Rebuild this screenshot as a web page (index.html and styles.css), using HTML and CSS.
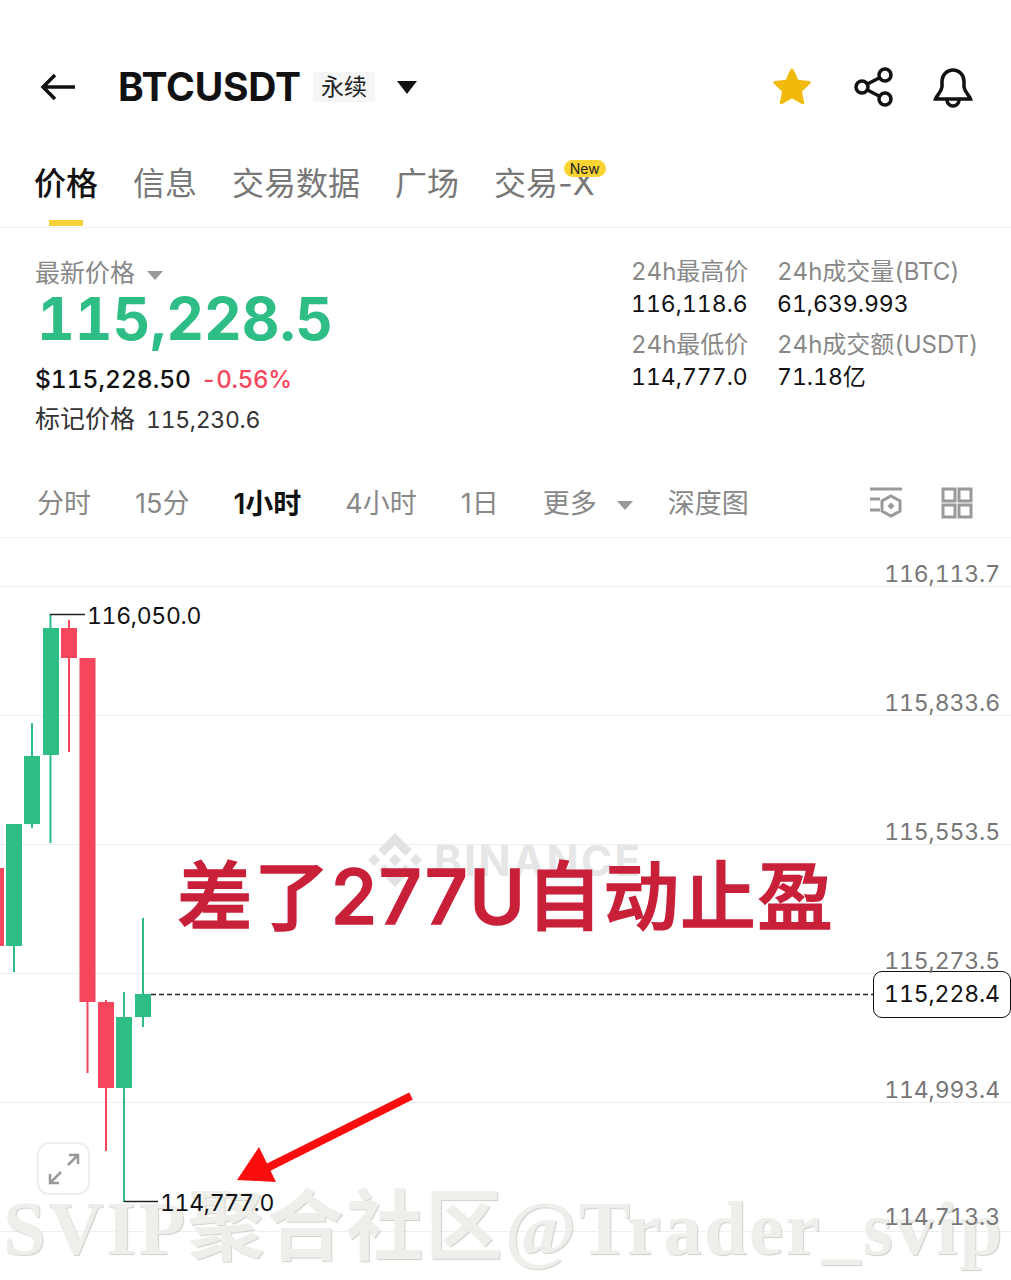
FILE: index.html
```html
<!DOCTYPE html>
<html lang="zh">
<head>
    <meta charset="UTF-8">
    <meta name="viewport" content="width=device-width, initial-scale=1.0">
    <title>BTCUSDT 永续</title>
    <link rel="stylesheet" href="styles.css">
</head>
<body>
    <header class="topbar">
        <svg class="back-icon" width="36" height="30" viewBox="0 0 36 30"><path d="M35 15H3M15 3L3 15l12 12"/></svg>
        <h1 class="symbol">BTCUSDT</h1>
        <span class="tag">永续</span>
        <span class="caret-big"></span>
        <div class="top-actions">
            <svg width="42" height="42" viewBox="0 0 42 42"><path class="star" d="M21 4l5.200 11.200 12 1.400-8.900 8.200 2.400 12L21 30.800 10.300 36.800l2.400-12-8.900-8.200 12-1.400z"/></svg>
            <svg class="line-icon" width="40" height="42" viewBox="0 0 40 42"><circle cx="9" cy="21" r="6"/><circle cx="32" cy="9" r="6"/><circle cx="32" cy="33" r="6"/><path d="M14.500 18l12-6.200M14.500 24l12 6.200"/></svg>
            <svg class="line-icon" width="40" height="42" viewBox="0 0 40 42"><path d="M2.500 33h35c-1-3.500-5.500-6-6.500-12v-6a11 11 0 0 0-22 0v6c-1 6-5.500 8.500-6.500 12z"/><path d="M14 34a6 6 0 0 0 12 0"/></svg>
        </div>
    </header>

    <nav class="tabs">
        <a class="tab active">价格</a>
        <a class="tab">信息</a>
        <a class="tab">交易数据</a>
        <a class="tab">广场</a>
        <a class="tab">交易-X<span class="new-badge">New</span></a>
    </nav>

    <section class="summary">
        <div class="price-block">
            <div class="muted-label">最新价格<span class="caret-small"></span></div>
            <div class="last-price">115,228.5</div>
            <div class="price-sub"><strong>$115,228.50</strong><span class="change">-0.56%</span></div>
            <div class="mark-price">标记价格<span>115,230.6</span></div>
        </div>
        <div class="stats">
            <div class="stat"><div class="muted-label">24h最高价</div><div>116,118.6</div></div>
            <div class="stat"><div class="muted-label">24h成交量(BTC)</div><div>61,639.993</div></div>
            <div class="stat"><div class="muted-label">24h最低价</div><div>114,777.0</div></div>
            <div class="stat"><div class="muted-label">24h成交额(USDT)</div><div>71.18亿</div></div>
        </div>
    </section>

    <div class="intervals">
        <a>分时</a>
        <a>15分</a>
        <a class="current">1小时</a>
        <a>4小时</a>
        <a>1日</a>
        <a class="more">更多<span class="caret-small"></span></a>
        <a>深度图</a>
        <div class="chart-tools">
            <svg class="tool-icon" width="34" height="34" viewBox="0 0 34 34"><path d="M1 3h32M1 13h10M1 24h10"/><path d="M22 10l9 5v10l-9 5-9-5V15z"/><path class="dot" d="M22 16.500l3.500 3.500-3.500 3.500-3.500-3.500z"/></svg>
            <svg class="tool-icon" width="32" height="32" viewBox="0 0 32 32"><rect x="2" y="2" width="12" height="12"/><rect x="18" y="2" width="12" height="12"/><rect x="2" y="18" width="12" height="12"/><rect x="18" y="18" width="12" height="12"/></svg>
        </div>
    </div>

    <main class="chart">
        <div class="grid-row first"><span>116,113.7</span></div>
        <div class="grid-row"><span>115,833.6</span></div>
        <div class="grid-row"><span>115,553.5</span></div>
        <div class="grid-row"><span>115,273.5</span></div>
        <div class="grid-row"><span>114,993.4</span></div>
        <div class="grid-row bottom"><span>114,713.3</span></div>

        <div class="stamp">SVIP聚合社区@Trader_svip</div>

        <div class="binance-mark">
            <svg width="54" height="54" viewBox="0 0 126.600 126.600"><path d="M38.700 53.200L63.300 28.600l24.600 24.600 14.300-14.300L63.300 0 24.400 38.900z"/><path d="M0 63.300L14.300 49l14.300 14.300L14.300 77.600z"/><path d="M38.700 73.400L63.300 98l24.600-24.600 14.300 14.300-38.900 38.900-38.900-38.900z"/><path d="M98 63.300L112.300 49l14.300 14.300-14.300 14.300z"/><path d="M77.800 63.300L63.300 48.800 48.900 63.300l14.400 14.400z"/></svg>
            <span>BINANCE</span>
        </div>

        <svg class="candles" width="1011" height="742" viewBox="0 538 1011 742">
            <g class="down">
                <rect x="-12" y="868" width="16" height="78"/>
                <rect x="68" y="620" width="2" height="132"/>
                <rect x="61" y="628" width="16" height="30"/>
                <rect x="86.500" y="658" width="2" height="415"/>
                <rect x="79.500" y="658" width="16" height="344"/>
                <rect x="105" y="1000" width="2" height="151"/>
                <rect x="98" y="1002" width="16" height="86"/>
            </g>
            <g class="up">
                <rect x="13" y="946" width="2" height="26"/>
                <rect x="6" y="824" width="16" height="122"/>
                <rect x="31" y="723" width="2" height="105"/>
                <rect x="24" y="756" width="16" height="68"/>
                <rect x="49.500" y="614" width="2" height="229"/>
                <rect x="43" y="628" width="16" height="127"/>
                <rect x="123" y="992" width="2" height="210"/>
                <rect x="116" y="1017" width="16" height="71"/>
                <rect x="142" y="918" width="2" height="109"/>
                <rect x="135" y="994" width="16" height="23"/>
            </g>
            <path class="leader" d="M50 614.500h35M124 1201.500h34"/>
            <path class="last-line" d="M151 994.500h722"/>
            <path class="red-arrow" d="M411 1096l-160 80"/>
            <path class="red-arrow-head" d="M237 1180l22-33 17 35z"/>
        </svg>

        <span class="extreme high">116,050.0</span>
        <span class="extreme low">114,777.0</span>
        <span class="current-price">115,228.4</span>

        <button class="expand">
            <svg width="32" height="32" viewBox="0 0 32 32"><path d="M2 30L13 19M20 12L30 2M21 2h9v9M2 21v9h9"/></svg>
        </button>

        <div class="note">差了277U自动止盈</div>
    </main>
</body>
</html>
```

FILE: styles.css
```css
body {
    margin: 0;
    width: 1011px;
    height: 1280px;
    overflow: hidden;
    background-color: #fff;
    color: #111;
    font-family: Inter, "Noto Sans CJK SC", sans-serif;
}

/* top bar */
.topbar {
    display: flex;
    align-items: center;
    height: 64px;
    margin-top: 55px;
    padding: 0 38px 0 40px;
}

.back-icon path {
    fill: none;
    stroke: #111;
    stroke-width: 3.5;
}

.symbol {
    margin: 0 0 0 42px;
    font-size: 39px;
    font-weight: 700;
    line-height: 64px;
    letter-spacing: -0.2px;
}

.tag {
    margin-left: 12px;
    padding: 0 8px;
    background-color: #f5f5f5;
    border-radius: 3px;
    font-size: 23px;
    line-height: 30px;
    color: #222;
}

.caret-big {
    margin-left: 22px;
    border-top: 13px solid #111;
    border-left: 10px solid transparent;
    border-right: 10px solid transparent;
}

.top-actions {
    display: flex;
    align-items: center;
    gap: 40px;
    margin-left: auto;
}

.star {
    fill: #f0b90b;
    stroke: #f0b90b;
    stroke-width: 3;
    stroke-linejoin: round;
}

.line-icon circle, .line-icon path {
    fill: none;
    stroke: #111;
    stroke-width: 3.5;
}

/* tabs */
.tabs {
    display: flex;
    gap: 35px;
    height: 77px;
    margin-top: 31px;
    padding-left: 34px;
    border-bottom: 1px solid #f3f3f3;
}

.tab {
    position: relative;
    height: 66px;
    font-size: 32px;
    line-height: 68px;
    color: #777;
}

.tab.active {
    color: #111;
    font-weight: 500;
}

.tab.active::after {
    content: "";
    position: absolute;
    left: 15px;
    top: 70px;
    width: 34px;
    height: 6px;
    background-color: #f6d23a;
}

.new-badge {
    position: absolute;
    right: -11px;
    top: 10px;
    padding: 0 6px;
    background-color: #fcd535;
    border-radius: 10px;
    font-size: 14px;
    line-height: 17px;
    color: #222;
}

/* price summary */
.summary {
    display: flex;
    justify-content: space-between;
    height: 228px;
    padding: 0 35px;
    font-variant-numeric: tabular-nums;
}

.muted-label {
    color: #888;
    white-space: nowrap;
}

.price-block {
    padding-top: 25px;
    font-size: 25px;
}

.caret-small {
    display: inline-block;
    margin-left: 12px;
    vertical-align: middle;
    border-top: 9px solid #999;
    border-left: 8px solid transparent;
    border-right: 8px solid transparent;
}

.last-price {
    margin-left: 2px;
    font-size: 58.500px;
    font-weight: 700;
    line-height: 60px;
    color: #2ebd85;
}

.price-sub {
    margin-top: 10px;
    line-height: 40px;
}

.price-sub strong {
    font-size: 24.500px;
    font-weight: 500;
}

.change {
    margin-left: 10px;
    font-size: 24px;
    font-weight: 500;
    letter-spacing: -0.3px;
    color: #f6465d;
}

.mark-price {
    line-height: 38px;
    color: #333;
}

.mark-price span {
    margin-left: 11px;
    font-size: 23px;
    letter-spacing: -0.3px;
}

.stats {
    display: grid;
    grid-template-columns: 146px 198px;
    grid-auto-rows: 73px;
    padding-top: 27px;
    margin-right: 1px;
    font-size: 23px;
    line-height: 33px;
}

.stats .muted-label {
    font-size: 24px;
}

/* interval row */
.intervals {
    display: flex;
    align-items: center;
    gap: 44px;
    box-sizing: border-box;
    height: 82px;
    padding: 10px 38px 0 37px;
    border-bottom: 1px solid #f0f0f0;
    font-size: 27px;
    color: #888;
}

.intervals .current {
    font-size: 28px;
    color: #111;
    font-weight: 600;
}

.intervals .more {
    margin-right: -9px;
}

.intervals .more .caret-small {
    margin-left: 20px;
}

.chart-tools {
    display: flex;
    align-items: center;
    gap: 38px;
    margin-top: 3px;
    margin-left: auto;
}

.tool-icon path, .tool-icon rect {
    fill: none;
    stroke: #999;
    stroke-width: 3;
}

.tool-icon .dot {
    fill: #999;
    stroke: none;
}

/* chart */
.chart {
    position: relative;
    height: 742px;
}

.grid-row {
    display: flex;
    justify-content: flex-end;
    align-items: flex-end;
    height: 128px;
    padding-right: 11px;
    border-bottom: 1px solid #eee;
    font-size: 23px;
    font-variant-numeric: tabular-nums;
    letter-spacing: -0.1px;
    line-height: 24px;
    color: #777;
}

.grid-row span {
    position: relative;
    z-index: 1;
}

.grid-row.first {
    height: 48px;
}

.grid-row.bottom span {
    margin-bottom: 2px;
}

.stamp {
    position: absolute;
    left: 3px;
    top: 635px;
    font-family: "Liberation Serif", "Noto Sans CJK SC", serif;
    font-size: 77px;
    font-weight: 700;
    line-height: 110px;
    letter-spacing: 2.300px;
    white-space: nowrap;
    color: #ecece8;
    text-shadow: 1px 1px 1px #c8c8c4, -1px -1px 0 #fff;
    opacity: 0.85;
}

.candles {
    position: absolute;
    left: 0;
    top: 0;
}

.down rect {
    fill: #f6465d;
}

.up rect {
    fill: #2ebd85;
}

.leader {
    fill: none;
    stroke: #222;
    stroke-width: 1.5;
}

.last-line {
    fill: none;
    stroke: #222;
    stroke-width: 1.5;
    stroke-dasharray: 5 3;
}

.red-arrow {
    fill: none;
    stroke: #f90d0d;
    stroke-width: 8;
}

.red-arrow-head {
    fill: #f90d0d;
}

.extreme {
    position: absolute;
    font-size: 23px;
    font-variant-numeric: tabular-nums;
    letter-spacing: -0.3px;
    line-height: 26px;
    color: #111;
}

.extreme.high {
    left: 87px;
    top: 65px;
}

.extreme.low {
    left: 160px;
    top: 652px;
}

.current-price {
    position: absolute;
    left: 873px;
    top: 433px;
    box-sizing: border-box;
    width: 138px;
    height: 47px;
    border: 1px solid #111;
    border-radius: 9px;
    background-color: #fff;
    font-size: 23px;
    font-variant-numeric: tabular-nums;
    letter-spacing: -0.1px;
    line-height: 45px;
    text-align: center;
    color: #111;
}

.expand {
    position: absolute;
    left: 37px;
    top: 604px;
    width: 53px;
    height: 53px;
    padding: 0;
    border: 2px solid #eee;
    border-radius: 12px;
    background-color: #fff;
}

.expand svg {
    display: block;
    margin: auto;
}

.expand path {
    fill: none;
    stroke: #999;
    stroke-width: 2.5;
}

.binance-mark {
    position: absolute;
    left: 368px;
    top: 295px;
    display: flex;
    align-items: center;
    gap: 12px;
    font-size: 42px;
    font-weight: 700;
    letter-spacing: 2.400px;
    color: #e6e6e6;
}

.binance-mark svg {
    fill: #e2e2e2;
}

.note {
    position: absolute;
    left: 177px;
    top: 304px;
    font-size: 75.500px;
    font-weight: 500;
    letter-spacing: 1.400px;
    line-height: 110px;
    white-space: nowrap;
    color: #c9203a;
    -webkit-text-stroke: 1.5px #c9203a;
}
```
